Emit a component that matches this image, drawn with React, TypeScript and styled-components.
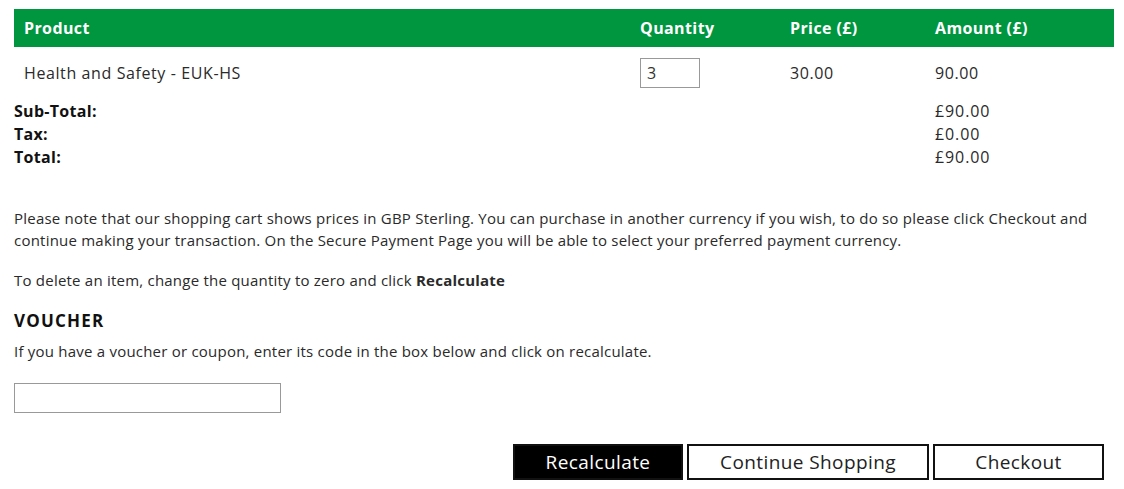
import React from "react";
import styled, { createGlobalStyle } from "styled-components";

const Global = createGlobalStyle`
  html, body { margin: 0; padding: 0; background: #fff; }
  body { font-family: "Open Sans", "Liberation Sans", sans-serif; color: #222; }
  * { box-sizing: border-box; }
`;

const Page = styled.div`
  padding: 9px 10px 0 14px;
  width: 1124px;
`;

const cols = "616px 150px 145px 1fr";

const HeaderRow = styled.div`
  display: grid;
  grid-template-columns: ${cols};
  height: 38px;
  align-items: center;
  background: #00963f;
  color: #fff;
  font-weight: 700;
  font-size: 16px;
  letter-spacing: 0.4px;
`;

const HeadCell = styled.div`
  padding-left: 10px;
`;

const ItemRow = styled.div`
  display: grid;
  grid-template-columns: ${cols};
  height: 52px;
  align-items: center;
  font-size: 16px;
  letter-spacing: 0.6px;
  color: #2a2a2a;
`;

const Cell = styled.div`
  padding-left: 10px;
`;

const QtyInput = styled.input`
  width: 60px;
  height: 30px;
  border: 1px solid #999;
  font: inherit;
  font-size: 16px;
  padding: 0 6px;
  color: #333;
`;

const Totals = styled.div`
  display: grid;
  grid-template-columns: ${cols};
  grid-auto-rows: 23px;
  align-items: center;
  font-size: 16px;
`;

const TotalLabel = styled.div<{ $row: number }>`
  grid-column: 1;
  grid-row: ${(p) => p.$row};
  font-weight: 700;
  letter-spacing: 0.3px;
  color: #111;
`;

const TotalValue = styled.div<{ $row: number }>`
  grid-column: 4;
  grid-row: ${(p) => p.$row};
  padding-left: 10px;
  letter-spacing: 0.9px;
  color: #2a2a2a;
`;

const Para = styled.p<{ $mt: number }>`
  margin: ${(p) => p.$mt}px 0 0;
  font-size: 15px;
  line-height: 22px;
  color: #2a2a2a;
  letter-spacing: 0.22px;
`;

const Heading = styled.h3`
  margin: 19px 0 0;
  font-size: 17px;
  font-weight: 700;
  line-height: 22px;
  letter-spacing: 1.2px;
  color: #111;
`;

const VoucherInput = styled.input`
  display: block;
  margin-top: 21px;
  width: 267px;
  height: 30px;
  border: 1px solid #999;
  font: inherit;
`;

const ButtonBar = styled.div`
  display: flex;
  justify-content: flex-end;
  gap: 4px;
  margin-top: 31px;
  padding-right: 10px;
`;

const Button = styled.button<{ $dark?: boolean; $w: number }>`
  width: ${(p) => p.$w}px;
  height: 36px;
  border: 2px solid #111;
  background: ${(p) => (p.$dark ? "#000" : "#fff")};
  color: ${(p) => (p.$dark ? "#fff" : "#222")};
  font-family: "Open Sans", "Liberation Sans", sans-serif;
  font-size: 19px;
  letter-spacing: 0.4px;
  padding: 0;
  cursor: pointer;
`;

export default function App() {
  return (
    <>
      <Global />
      <Page>
        <HeaderRow>
          <HeadCell>Product</HeadCell>
          <HeadCell>Quantity</HeadCell>
          <HeadCell>Price (£)</HeadCell>
          <HeadCell>Amount (£)</HeadCell>
        </HeaderRow>
        <ItemRow>
          <Cell>Health and Safety - EUK-HS</Cell>
          <Cell>
            <QtyInput defaultValue="3" />
          </Cell>
          <Cell>30.00</Cell>
          <Cell>90.00</Cell>
        </ItemRow>
        <Totals>
          <TotalLabel $row={1}>Sub-Total:</TotalLabel>
          <TotalValue $row={1}>£90.00</TotalValue>
          <TotalLabel $row={2}>Tax:</TotalLabel>
          <TotalValue $row={2}>£0.00</TotalValue>
          <TotalLabel $row={3}>Total:</TotalLabel>
          <TotalValue $row={3}>£90.00</TotalValue>
        </Totals>
        <Para $mt={39}>
          Please note that our shopping cart shows prices in GBP Sterling. You can purchase in another currency if you wish, to do so please click Checkout and continue making your transaction. On the Secure Payment Page you will be able to select your preferred payment currency.
        </Para>
        <Para $mt={18}>
          To delete an item, change the quantity to zero and click <b>Recalculate</b>
        </Para>
        <Heading>VOUCHER</Heading>
        <Para $mt={8}>
          If you have a voucher or coupon, enter its code in the box below and click on recalculate.
        </Para>
        <VoucherInput />
        <ButtonBar>
          <Button $dark $w={170}>Recalculate</Button>
          <Button $w={242}>Continue Shopping</Button>
          <Button $w={171}>Checkout</Button>
        </ButtonBar>
      </Page>
    </>
  );
}
